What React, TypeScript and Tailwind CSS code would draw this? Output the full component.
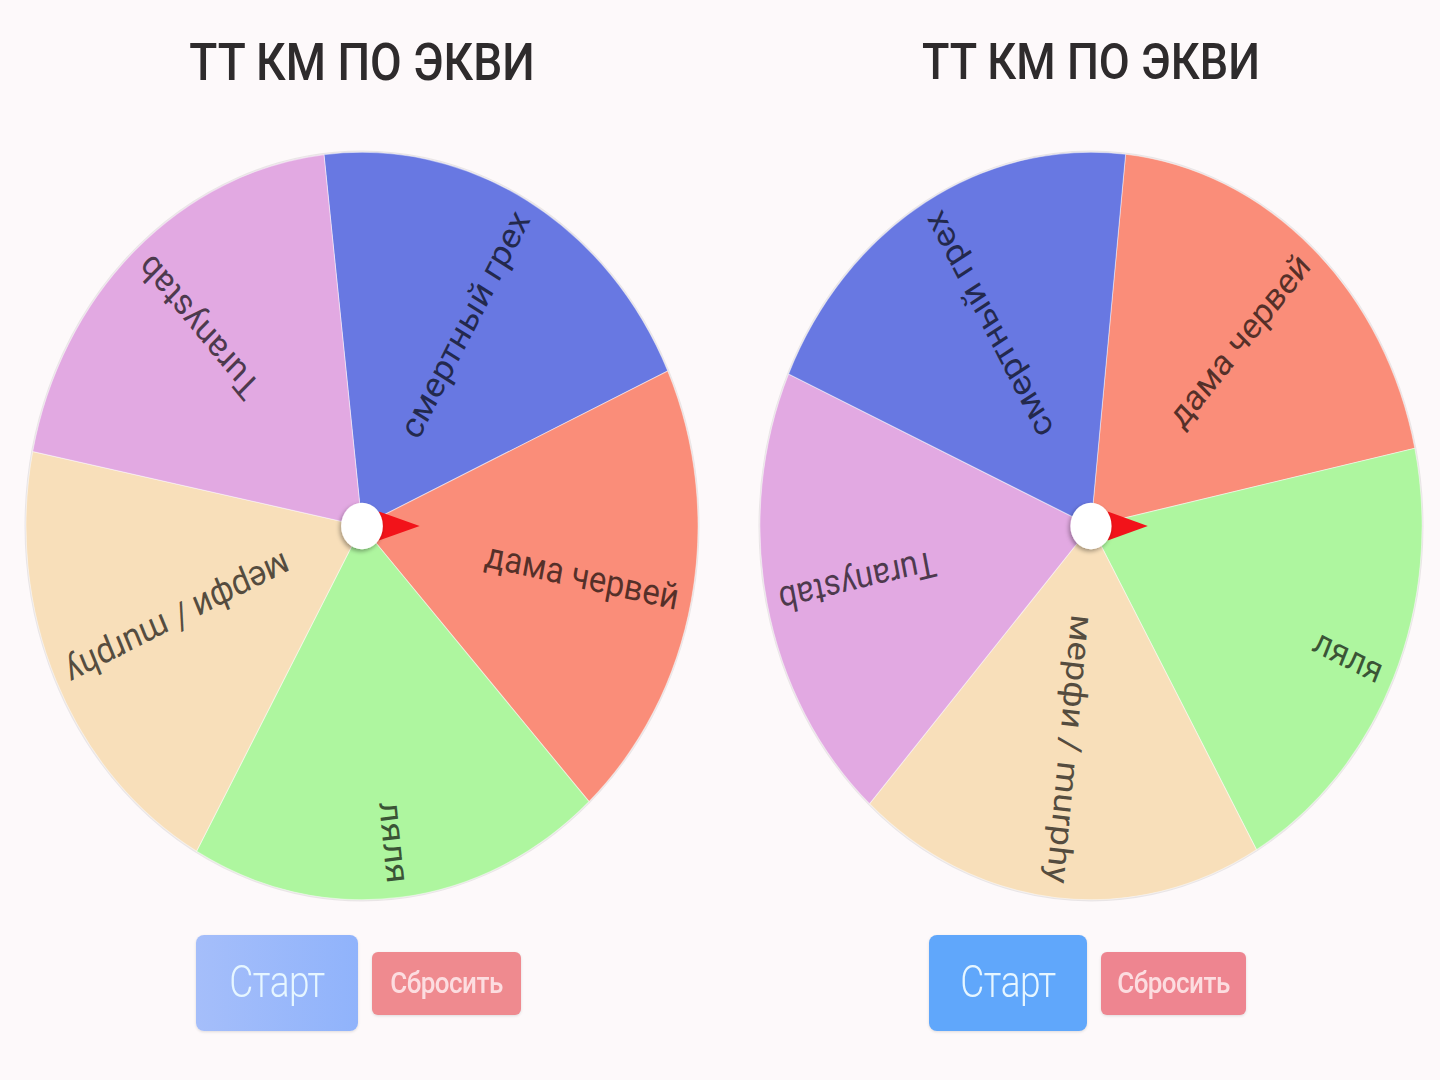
import React from "react";

type Slice = { label: string; color: string };

const BLUE = "#6878e2";
const RED = "#fa8d79";
const GREEN = "#aef69f";
const BEIGE = "#f8dfba";
const PINK = "#e2a9e2";

const leftSlices: Slice[] = [
  { label: "смертный грех", color: BLUE },
  { label: "дама червей", color: RED },
  { label: "ляля", color: GREEN },
  { label: "мерфи / murphy", color: BEIGE },
  { label: "Turanystab", color: PINK },
];

const rightSlices: Slice[] = [
  { label: "дама червей", color: RED },
  { label: "ляля", color: GREEN },
  { label: "мерфи / murphy", color: BEIGE },
  { label: "Turanystab", color: PINK },
  { label: "смертный грех", color: BLUE },
];

const R = 338;

function point(deg: number, r: number) {
  const a = (deg * Math.PI) / 180;
  return [r * Math.sin(a), -r * Math.cos(a)];
}

function Wheel({
  slices,
  start,
  width,
}: {
  slices: Slice[];
  start: number;
  width: number;
}) {
  const step = 360 / slices.length;
  return (
    <svg
      width={width}
      height={752}
      viewBox={`${-R - 2} ${-R - 2} ${2 * R + 4} ${2 * R + 4}`}
      preserveAspectRatio="none"
      className="block"
    >
      <defs>
        <filter id="hubShadow" x="-50%" y="-50%" width="200%" height="200%">
          <feDropShadow dx="-1.5" dy="2" stdDeviation="2" floodColor="#000" floodOpacity="0.35" />
        </filter>
      </defs>
      <circle cx={0} cy={0} r={R + 0.5} fill="none" stroke="rgba(0,0,0,0.08)" strokeWidth={2} />
      {slices.map((s, i) => {
        const a1 = start + i * step;
        const a2 = a1 + step;
        const [x1, y1] = point(a1, R);
        const [x2, y2] = point(a2, R);
        return (
          <path
            key={`p${i}`}
            d={`M0 0 L${x1} ${y1} A${R} ${R} 0 0 1 ${x2} ${y2} Z`}
            fill={s.color}
            stroke="rgba(255,255,255,0.45)"
            strokeWidth={1}
          />
        );
      })}
      {slices.map((s, i) => {
        const mid = start + i * step + step / 2;
        return (
          <text
            key={`t${i}`}
            transform={`rotate(${mid - 90})`}
            x={325}
            y={0}
            textAnchor="end"
            dominantBaseline="central"
            fontSize={33}
            fontFamily="Roboto, 'Noto Sans', sans-serif"
            fill="rgba(0,0,0,0.66)"
          >
            {s.label}
          </text>
        );
      })}
      <polygon points="17,-13 58,0 17,13" fill="#f2131a" />
      <circle cx={0} cy={0} r={21} fill="#ffffff" filter="url(#hubShadow)" />
    </svg>
  );
}

function Column({
  slices,
  start,
  width,
  titleClass,
  startClass,
  resetClass,
  startW,
  resetW,
}: {
  slices: Slice[];
  start: number;
  width: number;
  titleClass: string;
  startClass: string;
  resetClass: string;
  startW: string;
  resetW: string;
}) {
  return (
    <div className="flex flex-col items-center" style={{ width }}>
      <h1
        className={`mt-[34px] h-[56px] leading-[56px] ${titleClass} font-medium text-[#2e2b2c] scale-y-[1.11] whitespace-nowrap`}
      >
        ТТ КМ ПО ЭКВИ
      </h1>
      <div className="mt-[60px]">
        <Wheel slices={slices} start={start} width={width} />
      </div>
      <div className="mt-[33px] flex items-center gap-[14px] pr-[7px]">
        <button
          className={`${startW} h-[96px] rounded-[8px] ${startClass} flex items-center justify-center shadow-[0_1px_3px_rgba(0,0,0,0.12)]`}
        >
          <span className="text-[37px] font-light text-[#e6f6ff] scale-y-[1.2] tracking-[-0.5px]">Старт</span>
        </button>
        <button
          className={`${resetW} h-[63px] rounded-[6px] ${resetClass} flex items-center justify-center shadow-[0_1px_3px_rgba(0,0,0,0.12)]`}
        >
          <span className="text-[26px] font-medium text-[#fcdde0] scale-y-[1.12] tracking-[-0.5px]">Сбросить</span>
        </button>
      </div>
    </div>
  );
}

export default function App() {
  return (
    <div
      className="w-[1440px] h-[1080px] bg-[#fdf9fa] flex pl-[24px] gap-[58px] overflow-hidden"
      style={{ fontFamily: "Roboto, 'Noto Sans', sans-serif" }}
    >
      <Column
        slices={leftSlices}
        start={-6.5}
        width={676}
        titleClass="text-[46px]"
        startClass="bg-gradient-to-r from-[#a5befa] to-[#90b3fb]"
        resetClass="bg-[#ef8a8f]"
        startW="w-[162px]"
        resetW="w-[149px]"
      />
      <Column
        slices={rightSlices}
        start={6}
        width={666}
        titleClass="text-[45px]"
        startClass="bg-[#60a7fb]"
        resetClass="bg-[#ee8590]"
        startW="w-[158px]"
        resetW="w-[145px]"
      />
    </div>
  );
}
